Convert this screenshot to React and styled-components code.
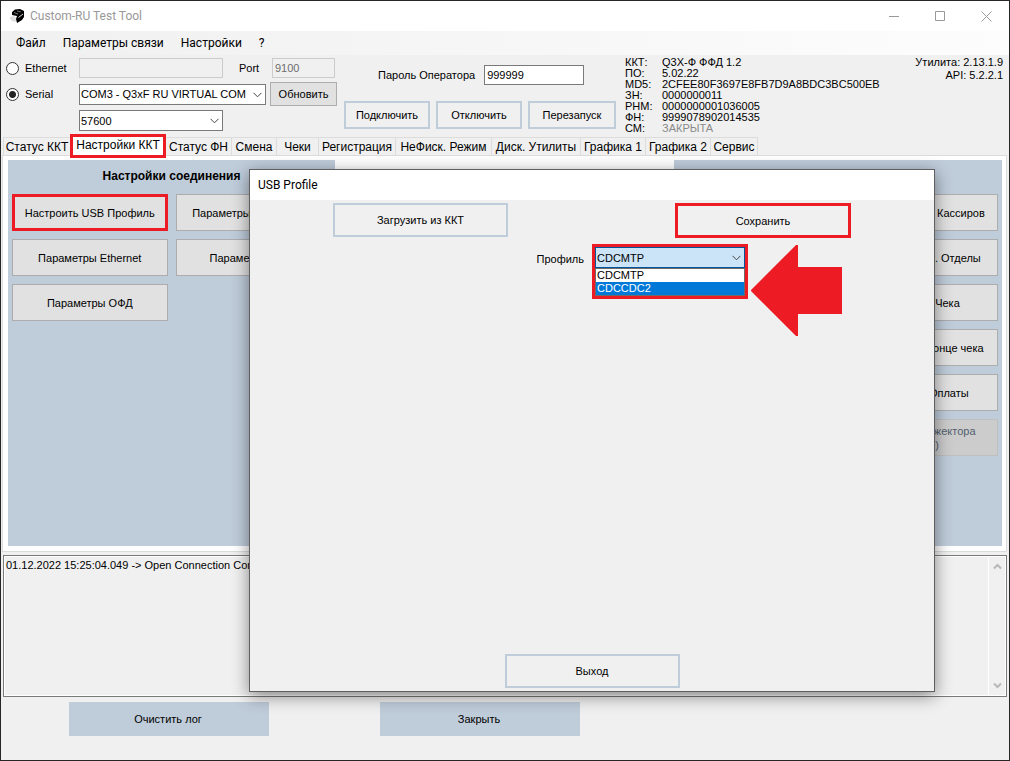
import React from "react";
import styled, { createGlobalStyle, css } from "styled-components";

const c = {
  face: "#f0f0f0",
  steel: "#bfccda",
  red: "#ed1c24",
  line: "#dcdcdc",
  edge: "#7a7a7a",
};
const chromeFont = `Roboto, "Open Sans", sans-serif`;

const Global = createGlobalStyle`
  *, *::before, *::after { box-sizing: border-box; }
  body { margin: 0; background: ${c.face}; }
  button, input, select, textarea { font: inherit; color: inherit; margin: 0; border-radius: 0; }
`;

const Window = styled.main`
  position: relative;
  min-height: 100vh;
  display: flex;
  flex-direction: column;
  border: 1px solid #262626;
  background: ${c.face};
  color: #000;
  font: 11px/14px "Liberation Sans", Arial, sans-serif;
  overflow: hidden;
`;

const TitleBar = styled.header`
  display: flex;
  align-items: center;
  height: 30px;
  padding-left: 9px;
  background: #fff;
  color: #999;
  font: 12px/16px ${chromeFont};
`;
const Title = styled.h1`
  flex: 1;
  margin: 0 0 0 4px;
  font: inherit;
`;
const CaptionButton = styled.button`
  display: grid;
  place-items: center;
  width: 46px;
  height: 30px;
  padding: 0;
  border: 0;
  background: none;
  color: #999;
`;

const Menu = styled.nav`
  display: flex;
  align-items: center;
  gap: 17px;
  height: 24px;
  padding-left: 15px;
  background: linear-gradient(90deg, #f0f0f0, #fdfdfd);
  font: 12px/16px ${chromeFont};
`;
const MenuItem = styled.a`
  color: #000;
  text-decoration: none;
`;

const Header = styled.section`
  display: flex;
  align-items: flex-start;
  height: 82px;
  padding: 0 6px 0 5px;
`;
const Connection = styled.div`
  display: grid;
  grid-template-columns: 73px 144px 47px 67px;
  grid-template-rows: 20px 24px 21px;
  row-gap: 4px;
  align-items: center;
  padding-top: 3px;
  width: 338px;
`;
const RadioLabel = styled.label`
  display: flex;
  align-items: center;
  gap: 6px;
`;
const Radio = styled.input`
  appearance: none;
  width: 13px;
  height: 13px;
  border: 1px solid #333;
  border-radius: 50% !important;
  background: #fff;
  &:checked { background: radial-gradient(circle, #222 3px, #fff 4px); }
`;
const Field = styled.input`
  width: ${(p) => p.$width};
  height: 20px;
  padding: 0 2px;
  border: 1px solid ${c.edge};
  background: #fff;
  &:disabled { border-color: #ccc; background: ${c.face}; color: #6d6d6d; }
`;
const PortGroup = styled.div`
  grid-column: 3 / 5;
  display: flex;
  align-items: center;
  justify-content: space-between;
  padding: 0 2px 0 16px;
`;
const SelectBox = styled.div`
  position: relative;
  width: ${(p) => p.$width};
  grid-column: ${(p) => p.$column};
  svg { position: absolute; right: 4px; top: 8px; pointer-events: none; }
`;
const Select = styled.select`
  display: block;
  appearance: none;
  width: 100%;
  height: 21px;
  padding: 0 16px 0 1px;
  border: 1px solid ${(p) => (p.$active ? "#005499" : c.edge)};
  background: ${(p) => (p.$active ? "#cce4f7" : "#fff")};
`;

const GrayButton = styled.button`
  height: ${(p) => p.$height || "37px"};
  padding: 0;
  border: 1px solid #adadad;
  background: #e1e1e1;
  white-space: nowrap;
  ${(p) => p.$marked && css`border: 3px solid ${c.red};`}
  &:disabled { background: #ccc; border-color: #bfbfbf; color: #52606e; }
`;
const OutlineButton = styled.button`
  flex: none;
  width: ${(p) => p.$width};
  height: ${(p) => p.$height || "34px"};
  padding: 0;
  background: ${c.face};
  border: 2px solid ${c.steel};
  ${(p) => p.$marked && css`border: 3px solid ${c.red};`}
`;

const Operator = styled.div`
  width: 281px;
  padding-top: 10px;
`;
const Password = styled.label`
  display: flex;
  align-items: center;
  gap: 9px;
  padding-left: 34px;
`;
const Actions = styled.div`
  display: flex;
  gap: 6px;
  margin-top: 16px;
`;

const Info = styled.dl`
  flex: 1;
  display: grid;
  grid-template-columns: 37px 1fr;
  margin: 2px 0 0;
  line-height: 11px;
`;
const Term = styled.dt``;
const Value = styled.dd`
  margin: 0;
  color: ${(p) => (p.$muted ? "#8a8a8a" : "#000")};
`;
const Versions = styled.div`
  padding-top: 1px;
  text-align: right;
  line-height: 13px;
`;

const Tabs = styled.div`
  display: flex;
  align-items: flex-end;
  height: 18px;
  padding-left: 2px;
  font-size: 12px;
`;
const Tab = styled.button`
  width: ${(p) => p.$width};
  height: 18px;
  padding: 0;
  border: 1px solid ${c.line};
  border-width: 1px 1px 0 0;
  background: ${c.face};
  white-space: nowrap;
  &:first-child { border-left-width: 1px; }
  ${(p) => p.$marked && css`
    position: relative;
    height: 24px;
    margin: 0 0 -3px -1px;
    padding-bottom: 2px;
    background: #fff;
    border: 3px solid ${c.red};
  `}
`;
const Page = styled.section`
  flex: 1 0 auto;
  display: grid;
  grid-template-columns: 327fr 339fr 328fr;
  margin: 0 2px 0 1px;
  padding: 4px 4px 5px 5px;
  border: 1px solid ${c.line};
  background: #fff;
`;
const Panel = styled.section`
  min-height: 386px;
  padding: 9px 4px;
  background: ${c.steel};
`;
const PanelTitle = styled.h2`
  margin: 0 0 11px;
  min-height: 14px;
  text-align: center;
  font-size: 12px;
  line-height: 14px;
`;
const ButtonGrid = styled.div`
  display: grid;
  grid-template-columns: 1fr 1fr;
  gap: 8px;
`;
const Column = styled.div`
  display: flex;
  flex-direction: column;
  gap: 8px;
`;

const Log = styled.section`
  display: flex;
  height: 142px;
  margin: 3px 2px 0;
  padding: 1px;
  border: 1px solid ${c.edge};
  background: #fff;
`;
const LogText = styled.textarea`
  flex: 1;
  padding: 1px 1px;
  border: 0;
  resize: none;
  overflow: hidden;
  background: ${c.face};
`;
const ScrollBar = styled.div`
  display: flex;
  flex-direction: column;
  justify-content: space-between;
  align-items: center;
  width: 16px;
  margin-left: 1px;
  padding: 6px 0;
  background: ${c.face};
`;
const Footer = styled.footer`
  display: flex;
  gap: 111px;
  padding: 5px 0 24px 68px;
`;
const FooterButton = styled.button`
  width: 200px;
  height: 34px;
  padding: 0 2px 0 0;
  border: 0;
  background: ${c.steel};
`;

const Dialog = styled.section`
  position: absolute;
  left: 248px;
  top: 168px;
  width: 686px;
  height: 523px;
  display: flex;
  flex-direction: column;
  border: 1px solid #5f5f5f;
  background: ${c.face};
  box-shadow: 0 4px 16px rgba(0, 0, 0, 0.45);
`;
const DialogTitle = styled.h2`
  margin: 0;
  padding: 0 8px;
  background: #fff;
  font: 12px/30px ${chromeFont};
`;
const DialogBody = styled.div`
  flex: 1;
  display: flex;
  flex-direction: column;
  padding: 3px 83px;
`;
const DialogRow = styled.div`
  display: flex;
  justify-content: space-between;
`;
const ProfileRow = styled.div`
  display: flex;
  align-items: flex-start;
  justify-content: flex-end;
  gap: 8px;
  margin-top: 6px;
  padding-right: 103px;
`;
const ProfileLabel = styled.label`
  padding-top: 8px;
`;
const Combo = styled.div`
  width: 156px;
  border: 3px solid ${c.red};
`;
const Options = styled.ul`
  margin: 0;
  padding: 0;
  border: 1px solid #6b6b6b;
  background: #fff;
  list-style: none;
  line-height: 13px;
`;
const Option = styled.li`
  padding-left: 1px;
  background: ${(p) => (p.$selected ? "#0078d7" : "#fff")};
  color: ${(p) => (p.$selected ? "#fff" : "#000")};
`;
const DialogFooter = styled.div`
  margin-top: auto;
  display: flex;
  justify-content: center;
`;
const Arrow = styled.svg`
  position: absolute;
  left: 501px;
  top: 75px;
`;

const Chevron = () => (
  <svg width="9" height="6" viewBox="0 0 9 6" fill="none" stroke="#444" aria-hidden="true">
    <path d="M.5 .8 4.5 4.8 8.5 .8" />
  </svg>
);
const ScrollArrow = ({ d }) => (
  <svg width="9" height="7" viewBox="0 0 9 7" fill="none" stroke="#b8b8b8" strokeWidth="2" aria-hidden="true">
    <path d={d} />
  </svg>
);
const Logo = () => (
  <svg width="16" height="16" viewBox="0 0 16 16" aria-hidden="true">
    <path d="M0 9l4-1 3 3-2 3-3-1-2-2z" fill="#dedede" />
    <path d="M2 4 5 1.500 10 1l4 2v6l-2 3-5 3-1-4 1-3-5-1z" fill="#000" />
    <path d="M4 4.500 8 6M7 3l4 1" stroke="#777" strokeWidth="1" />
    <path d="M8.500 9.500 13 6" stroke="#ddd" strokeWidth="1" />
  </svg>
);

const info = [
  ["ККТ:", "Q3X-Ф ФФД 1.2"],
  ["ПО:", "5.02.22"],
  ["MD5:", "2CFEE80F3697E8FB7D9A8BDC3BC500EB"],
  ["ЗН:", "0000000011"],
  ["РНМ:", "0000000001036005"],
  ["ФН:", "9999078902014535"],
  ["СМ:", "ЗАКРЫТА"],
];
const tabs = [
  ["Статус ККТ", 68],
  ["Настройки ККТ", 96],
  ["Статус ФН", 66],
  ["Смена", 45],
  ["Чеки", 42],
  ["Регистрация", 77],
  ["НеФиск. Режим", 96],
  ["Диск. Утилиты", 89],
  ["Графика 1", 65],
  ["Графика 2", 65],
  ["Сервис", 47],
];

export default function App() {
  return (
    <Window>
      <Global />
      <TitleBar>
        <Logo />
        <Title>Custom-RU Test Tool</Title>
        <CaptionButton aria-label="Свернуть">
          <svg width="11" height="11" stroke="#999"><path d="M0 5.500h10" /></svg>
        </CaptionButton>
        <CaptionButton aria-label="Развернуть">
          <svg width="11" height="11" stroke="#999" fill="none"><path d="M.5 .5h9v9h-9z" /></svg>
        </CaptionButton>
        <CaptionButton aria-label="Закрыть окно">
          <svg width="11" height="11" stroke="#999"><path d="M.5 .5l10 10M10.500 .5l-10 10" /></svg>
        </CaptionButton>
      </TitleBar>
      <Menu>
        {["Файл", "Параметры связи", "Настройки", "?"].map((m) => (
          <MenuItem href="#" key={m}>{m}</MenuItem>
        ))}
      </Menu>
      <Header>
        <Connection>
          <RadioLabel><Radio type="radio" name="link" />Ethernet</RadioLabel>
          <Field $width="144px" disabled aria-label="IP" />
          <PortGroup>
            <label htmlFor="port">Port</label>
            <Field id="port" $width="63px" disabled defaultValue="9100" />
          </PortGroup>
          <RadioLabel><Radio type="radio" name="link" defaultChecked />Serial</RadioLabel>
          <SelectBox $width="187px" $column="2 / 4">
            <Select aria-label="COM"><option>COM3 - Q3xF RU VIRTUAL COM (COM3)</option></Select>
            <Chevron />
          </SelectBox>
          <GrayButton $height="24px">Обновить</GrayButton>
          <SelectBox $width="144px" $column="2">
            <Select aria-label="Baud rate"><option>57600</option></Select>
            <Chevron />
          </SelectBox>
        </Connection>
        <Operator>
          <Password>Пароль Оператора<Field $width="100px" defaultValue="999999" /></Password>
          <Actions>
            <OutlineButton $width="86px" $height="28px">Подключить</OutlineButton>
            <OutlineButton $width="86px" $height="28px">Отключить</OutlineButton>
            <OutlineButton $width="88px" $height="28px">Перезапуск</OutlineButton>
          </Actions>
        </Operator>
        <Info>
          {info.map(([k, v]) => (
            <React.Fragment key={k}>
              <Term>{k}</Term>
              <Value $muted={k === "СМ:"}>{v}</Value>
            </React.Fragment>
          ))}
        </Info>
        <Versions>
          <div>Утилита: 2.13.1.9</div>
          <div>API: 5.2.2.1</div>
        </Versions>
      </Header>
      <Tabs role="tablist">
        {tabs.map(([t, w], i) => (
          <Tab key={t} role="tab" aria-selected={i === 1} $width={`${w}px`} $marked={i === 1}>{t}</Tab>
        ))}
      </Tabs>
      <Page>
        <Panel>
          <PanelTitle>Настройки соединения</PanelTitle>
          <ButtonGrid>
            <Column>
              <GrayButton $marked>Настроить USB Профиль</GrayButton>
              <GrayButton>Параметры Ethernet</GrayButton>
              <GrayButton>Параметры ОФД</GrayButton>
            </Column>
            <Column>
              <GrayButton>Параметры соединения</GrayButton>
              <GrayButton>Параметры Wi-Fi</GrayButton>
            </Column>
          </ButtonGrid>
        </Panel>
        <div />
        <Panel>
          <PanelTitle />
          <ButtonGrid>
            <Column />
            <Column>
              <GrayButton>Программиров. Кассиров</GrayButton>
              <GrayButton>Программиров. Отделы</GrayButton>
              <GrayButton>Заголовки Чека</GrayButton>
              <GrayButton>Сообщения в конце чека</GrayButton>
              <GrayButton>Программ. Оплаты</GrayButton>
              <GrayButton disabled>Настройка инжектора<br />(опция)</GrayButton>
            </Column>
          </ButtonGrid>
        </Panel>
      </Page>
      <Log>
        <LogText readOnly aria-label="Лог" defaultValue="01.12.2022 15:25:04.049 -> Open Connection Command" />
        <ScrollBar>
          <ScrollArrow d="M1 5.500 4.500 2 8 5.500" />
          <ScrollArrow d="M1 1.500 4.500 5 8 1.500" />
        </ScrollBar>
      </Log>
      <Footer>
        <FooterButton>Очистить лог</FooterButton>
        <FooterButton>Закрыть</FooterButton>
      </Footer>
      <Dialog role="dialog" aria-label="USB Profile">
        <DialogTitle>USB Profile</DialogTitle>
        <DialogBody>
          <DialogRow>
            <OutlineButton $width="175px">Загрузить из ККТ</OutlineButton>
            <OutlineButton $width="176px" $height="35px" $marked>Сохранить</OutlineButton>
          </DialogRow>
          <ProfileRow>
            <ProfileLabel htmlFor="profile">Профиль</ProfileLabel>
            <Combo>
              <SelectBox $width="150px">
                <Select id="profile" $active><option>CDCMTP</option><option>CDCCDC2</option></Select>
                <Chevron />
              </SelectBox>
              <Options role="listbox" aria-label="Профиль">
                <Option role="option">CDCMTP</Option>
                <Option role="option" aria-selected $selected>CDCCDC2</Option>
              </Options>
            </Combo>
          </ProfileRow>
          <DialogFooter>
            <OutlineButton $width="175px">Выход</OutlineButton>
          </DialogFooter>
        </DialogBody>
        <Arrow width="91" height="91" viewBox="0 0 91 91" aria-hidden="true">
          <path d="M0 45 45 0h2v22h44v47H47v22h-2L0 46z" fill={c.red} />
        </Arrow>
      </Dialog>
    </Window>
  );
}
